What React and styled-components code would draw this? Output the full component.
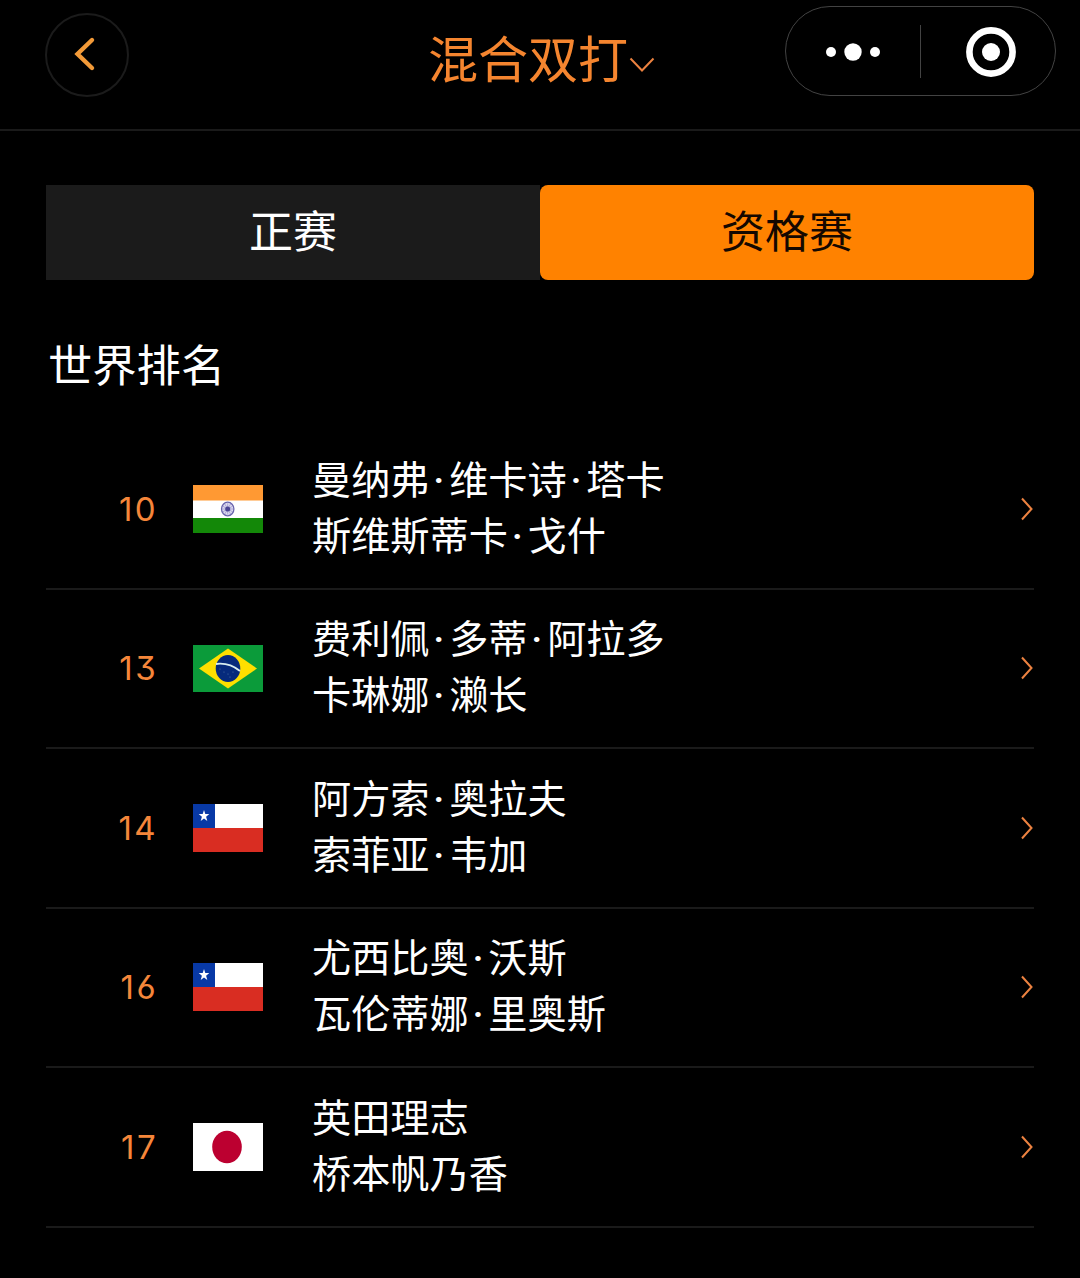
import React from "react";
import styled, { createGlobalStyle } from "styled-components";

const GlobalStyle = createGlobalStyle`
  * { box-sizing: border-box; }
  body {
    margin: 0;
    background: #000;
    color: #fff;
    font-family: "Noto Sans CJK SC", sans-serif;
  }
`;

const Page = styled.main`
  width: 1080px;
  height: 1278px;
  overflow: hidden;
  background: #000;
`;

const Header = styled.header`
  display: grid;
  grid-template-columns: 340px 1fr 340px;
  height: 131px;
  padding: 0 24px 0 45px;
  border-bottom: 2px solid #1a1a1a;
`;

const BackButton = styled.button`
  display: flex;
  width: 84px;
  height: 84px;
  margin-top: 13px;
  padding: 0;
  border: 2px solid #1b1b1b;
  border-radius: 50%;
  background: transparent;
`;

const Title = styled.h1`
  display: flex;
  align-items: center;
  gap: 1px;
  height: 112px;
  margin: 0;
  padding-left: 43px;
  color: #f5852f;
  font-size: 50px;
  font-weight: 400;
  line-height: 60px;
  white-space: nowrap;
`;

const Capsule = styled.div`
  display: grid;
  grid-template-columns: 134px 1px 1fr;
  align-items: center;
  justify-self: end;
  width: 271px;
  height: 90px;
  margin-top: 6px;
  border: 1px solid #434343;
  border-radius: 45px;
`;

const CapsuleButton = styled.button`
  display: flex;
  align-items: center;
  justify-content: center;
  height: 100%;
  padding: 1px 0 0 ${(p) => p.$inset || 0}px;
  border: 0;
  background: transparent;
`;

const CapsuleDivider = styled.span`
  height: 53px;
  background: #434343;
`;

const Content = styled.section`
  padding: 54px 46px 0;
`;

const Tabs = styled.div`
  display: grid;
  grid-template-columns: 1fr 1fr;
  height: 95px;
`;

const Tab = styled.button`
  display: flex;
  align-items: center;
  justify-content: center;
  padding: 0 0 8px;
  border: 0;
  border-radius: ${(p) => (p.$active ? "8px" : "0")};
  background: ${(p) => (p.$active ? "#ff8200" : "#1b1b1b")};
  color: ${(p) => (p.$active ? "#140800" : "#fff")};
  font-family: inherit;
  font-size: 44px;
`;

const Heading = styled.h2`
  height: 60px;
  margin: 53px 0 37px;
  padding-left: 2px;
  font-size: 44.3px;
  font-weight: 400;
  line-height: 60px;
`;

const List = styled.ul`
  margin: 0;
  padding: 0;
  list-style: none;
`;

const Row = styled.li`
  display: grid;
  grid-template-columns: 110px 70px 1fr auto;
  align-items: center;
  height: 159.5px;
  padding-right: 1px;
  border-bottom: 2px solid #1a1a1a;
`;

const Rank = styled.span`
  margin-right: -2px;
  color: #f5863a;
  font-family: Inter, "Noto Sans", sans-serif;
  font-size: 33px;
  font-feature-settings: "cv03" 1, "cv09" 1;
  letter-spacing: 2.4px;
  text-align: right;
`;

const FlagBox = styled.span`
  display: flex;
  margin-left: 37px;
  width: 70px;
  height: 48px;
`;

const Names = styled.div`
  margin-left: 86px;
  padding-bottom: 8px;
  font-size: 39.2px;
  line-height: 56px;
  white-space: nowrap;
`;

const Name = styled.div``;

const Dot = styled.span`
  display: inline-block;
  width: 19.6px;
  padding-right: 1px;
  font-family: Roboto, sans-serif;
  font-weight: 500;
  line-height: 1;
  text-align: center;
`;

function Chevron({ width, height, points, stroke, color = "#ec8240", cap = "butt" }) {
  return (
    <svg width={width} height={height} viewBox={`0 0 ${width} ${height}`} fill="none">
      <polyline points={points} stroke={color} strokeWidth={stroke} strokeLinecap={cap} strokeLinejoin="miter" />
    </svg>
  );
}

function India() {
  const spokes = Array.from({ length: 12 }, (_, i) => i * 30);
  return (
    <svg width="70" height="48" viewBox="0 0 70 48">
      <rect width="70" height="48" fill="#fff" />
      <rect width="70" height="15.5" fill="#ff9933" />
      <rect y="33" width="70" height="15" fill="#138808" />
      <ellipse cx="34.7" cy="24" rx="6.2" ry="6.8" fill="#dedcf0" stroke="#6964ad" strokeWidth="1.3" />
      {spokes.map((a) => (
        <path key={a} d="M34.7 24V18.4" stroke="#8d88c6" strokeWidth=".6" transform={`rotate(${a} 34.7 24)`} />
      ))}
      <circle cx="34.7" cy="24" r="2.5" fill="#4a4494" />
    </svg>
  );
}

function Brazil() {
  return (
    <svg width="70" height="48" viewBox="0 0 70 48">
      <rect y="1" width="70" height="47" fill="#0b9b3a" />
      <path d="M6 24.5L35 4.5L64 24.5L35 44.5Z" fill="#fedf00" />
      <ellipse cx="35" cy="24.5" rx="12.3" ry="13.4" fill="#062a7c" />
      <path d="M23 20Q36 18.3 47 27" fill="none" stroke="#d8eef0" strokeWidth="1.8" />
      <g fill="#4f74a5">
        <circle cx="27" cy="25" r=".6" />
        <circle cx="31" cy="28" r=".6" />
        <circle cx="35" cy="30" r=".6" />
        <circle cx="40" cy="28" r=".6" />
        <circle cx="37" cy="33" r=".6" />
      </g>
    </svg>
  );
}

function Chile() {
  return (
    <svg width="70" height="48" viewBox="0 0 70 48">
      <rect width="70" height="48" fill="#fff" />
      <rect y="24" width="70" height="24" fill="#d92d22" />
      <rect width="22" height="24" fill="#0839a6" />
      <path d="M11 6L12.3 10.1H16.3L13.1 12.7L14.3 17L11 14.4L7.7 17L8.9 12.7L5.7 10.1H9.7Z" fill="#fff" />
    </svg>
  );
}

function Japan() {
  return (
    <svg width="70" height="48" viewBox="0 0 70 48">
      <rect width="70" height="48" fill="#fff" />
      <ellipse cx="34" cy="24" rx="14.8" ry="16.2" fill="#bc0030" />
    </svg>
  );
}

const pairs = [
  { rank: 10, Flag: India, names: ["曼纳弗·维卡诗·塔卡", "斯维斯蒂卡·戈什"] },
  { rank: 13, Flag: Brazil, names: ["费利佩·多蒂·阿拉多", "卡琳娜·濑长"] },
  { rank: 14, Flag: Chile, names: ["阿方索·奥拉夫", "索菲亚·韦加"] },
  { rank: 16, Flag: Chile, names: ["尤西比奥·沃斯", "瓦伦蒂娜·里奥斯"] },
  { rank: 17, Flag: Japan, names: ["英田理志", "桥本帆乃香"] },
];

function PlayerName({ children }) {
  return (
    <Name>
      {children.split("·").map((part, i) => (
        <React.Fragment key={i}>
          {i > 0 && <Dot>·</Dot>}
          {part}
        </React.Fragment>
      ))}
    </Name>
  );
}

export default function App() {
  return (
    <Page lang="zh-CN">
      <GlobalStyle />
      <Header>
        <BackButton aria-label="返回">
          <Chevron width={80} height={80} points="45,25 30.5,39 45,53" stroke={4.4} color="#f29a38" cap="round" />
        </BackButton>
        <Title>
          混合双打
          <Chevron width={26} height={36} points="1.5,20.5 13,32.5 24.5,20.5" stroke={2} />
        </Title>
        <Capsule>
          <CapsuleButton aria-label="更多">
            <svg width="56" height="20" viewBox="0 0 56 20" fill="#fff">
              <circle cx="6" cy="10" r="5" />
              <circle cx="28" cy="10" r="8.7" />
              <circle cx="50" cy="10" r="5" />
            </svg>
          </CapsuleButton>
          <CapsuleDivider />
          <CapsuleButton aria-label="关闭" $inset={5}>
            <svg width="50" height="50" viewBox="0 0 50 50">
              <circle cx="25" cy="25" r="21.6" fill="none" stroke="#fff" strokeWidth="6.6" />
              <circle cx="25" cy="25" r="9" fill="#fff" />
            </svg>
          </CapsuleButton>
        </Capsule>
      </Header>
      <Content>
        <Tabs>
          <Tab>正赛</Tab>
          <Tab $active>资格赛</Tab>
        </Tabs>
        <Heading>世界排名</Heading>
        <List>
          {pairs.map(({ rank, Flag, names }) => (
            <Row key={rank}>
              <Rank>{rank}</Rank>
              <FlagBox>
                <Flag />
              </FlagBox>
              <Names>
                {names.map((n) => (
                  <PlayerName key={n}>{n}</PlayerName>
                ))}
              </Names>
              <Chevron width={12} height={24} points="1,1.5 10.5,12 1,22.5" stroke={2} />
            </Row>
          ))}
        </List>
      </Content>
    </Page>
  );
}
